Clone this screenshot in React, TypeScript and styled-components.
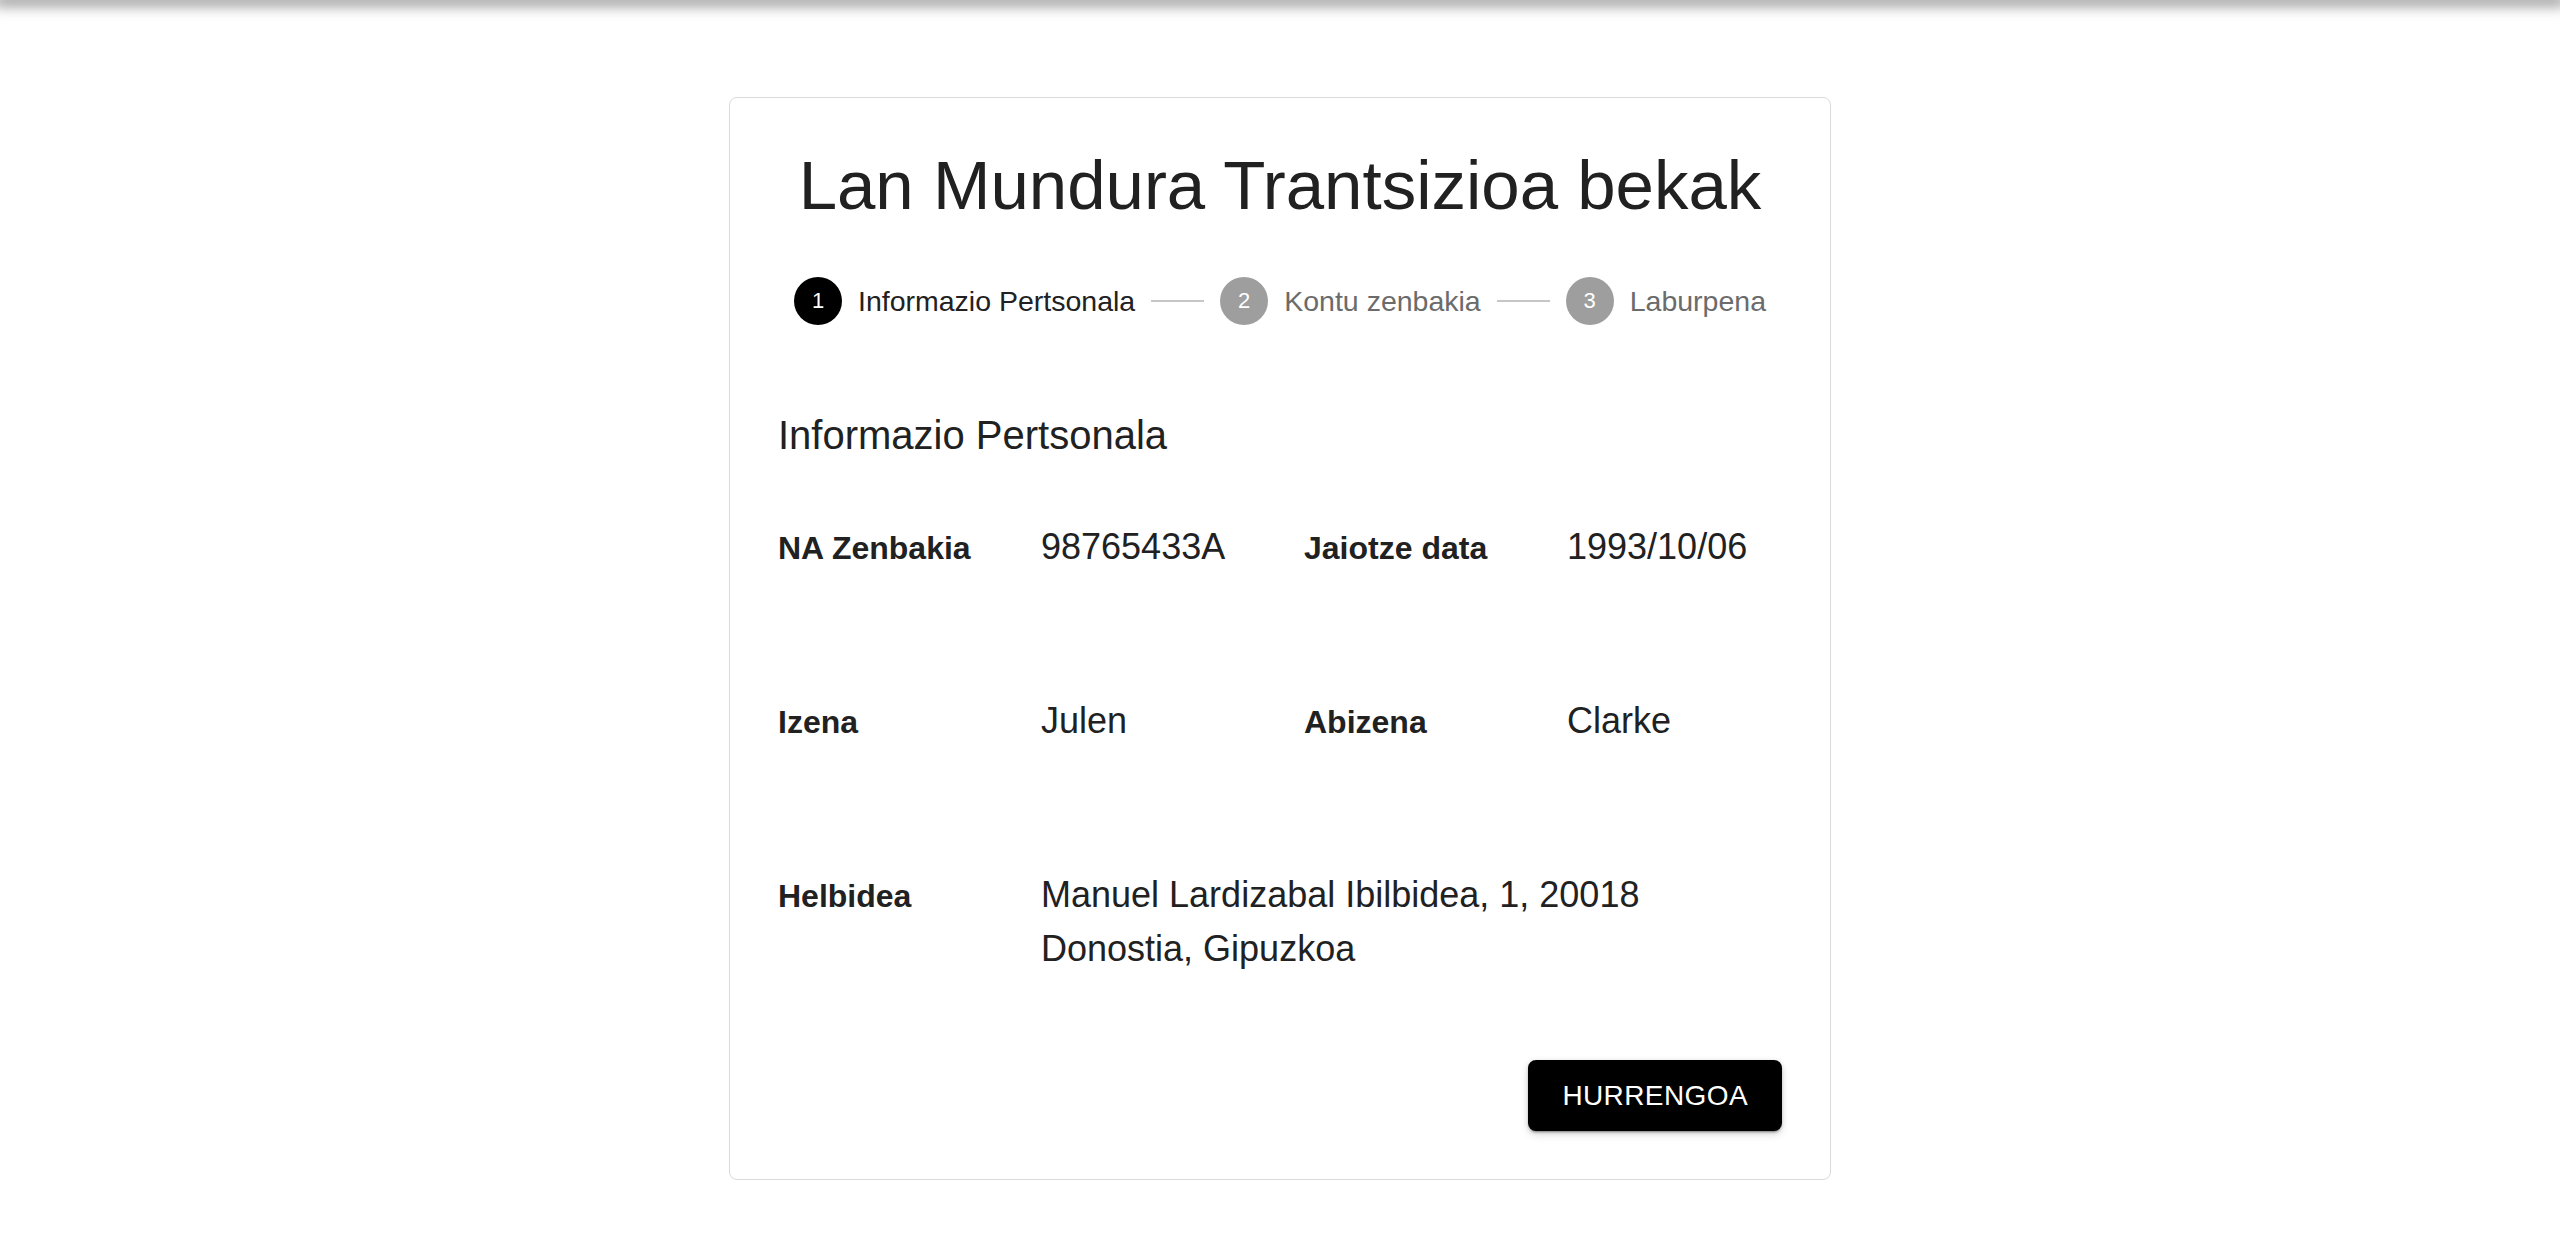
import React from "react";
import styled, { createGlobalStyle } from "styled-components";

const GlobalStyle = createGlobalStyle`
  html, body {
    margin: 0;
    padding: 0;
    background: #ffffff;
  }
  body {
    font-family: "Liberation Sans", Arial, Helvetica, sans-serif;
    color: #212121;
  }
  * { box-sizing: border-box; }
`;

const TopBar = styled.header`
  height: 0;
  width: 100%;
  box-shadow: 0 0 14px 6px rgba(0, 0, 0, 0.42);
`;

const Page = styled.main`
  display: flex;
  justify-content: center;
  padding: 97px 0 72px;
`;

const Card = styled.section`
  width: 1102px;
  border: 1px solid #dadada;
  border-radius: 8px;
  padding: 48px;
  background: #fff;
`;

const Title = styled.h1`
  margin: 0;
  font-size: 69px;
  line-height: 80px;
  font-weight: 400;
  text-align: center;
  color: #212121;
`;

const Stepper = styled.nav`
  display: flex;
  align-items: center;
  margin-top: 51px;
`;

const Step = styled.div`
  display: flex;
  align-items: center;
  padding: 0 16px;
`;

const StepIcon = styled.span<{ $active?: boolean }>`
  width: 48px;
  height: 48px;
  border-radius: 50%;
  flex: none;
  display: flex;
  align-items: center;
  justify-content: center;
  background: ${(p) => (p.$active ? "#000000" : "#9e9e9e")};
  color: #ffffff;
  font-size: 22px;
  line-height: 1;
`;

const StepLabel = styled.span<{ $active?: boolean }>`
  margin-left: 16px;
  font-size: 28.5px;
  line-height: 40px;
  white-space: nowrap;
  color: ${(p) => (p.$active ? "#212121" : "#6b6b6b")};
`;

const Connector = styled.span`
  flex: 1 1 auto;
  border-top: 2px solid #c6c6c6;
`;

const SectionTitle = styled.h2`
  margin: 78px 0 0;
  font-size: 40px;
  line-height: 64px;
  font-weight: 400;
  color: #212121;
`;

const InfoGrid = styled.dl`
  margin: 53px 0 0;
  display: grid;
  grid-template-columns: repeat(4, 1fr);
  column-gap: 48px;
  row-gap: 120px;
  align-items: baseline;
`;

const Label = styled.dt`
  margin: 0;
  font-size: 32px;
  line-height: 48px;
  font-weight: 700;
  color: #212121;
`;

const Value = styled.dd<{ $span?: number }>`
  margin: 0;
  font-size: 36px;
  line-height: 54px;
  color: #212121;
  grid-column: span ${(p) => p.$span ?? 1};
`;

const Actions = styled.div`
  display: flex;
  justify-content: flex-end;
  margin-top: 84px;
`;

const PrimaryButton = styled.button`
  font-family: inherit;
  border: none;
  cursor: pointer;
  background: #000000;
  color: #ffffff;
  font-size: 28px;
  line-height: 49px;
  letter-spacing: 0.4px;
  text-transform: uppercase;
  padding: 11px 34px;
  border-radius: 8px;
  box-shadow: 0 3px 1px -2px rgba(0, 0, 0, 0.2), 0 2px 2px 0 rgba(0, 0, 0, 0.14),
    0 1px 5px 0 rgba(0, 0, 0, 0.12), 0 4px 8px rgba(0, 0, 0, 0.12);
`;

const steps = ["Informazio Pertsonala", "Kontu zenbakia", "Laburpena"];

const fields: { label: string; value: string; span?: number }[] = [
  { label: "NA Zenbakia", value: "98765433A" },
  { label: "Jaiotze data", value: "1993/10/06" },
  { label: "Izena", value: "Julen" },
  { label: "Abizena", value: "Clarke" },
  {
    label: "Helbidea",
    value: "Manuel Lardizabal Ibilbidea, 1, 20018 Donostia, Gipuzkoa",
    span: 3,
  },
];

export default function App() {
  const activeStep = 0;
  return (
    <>
      <GlobalStyle />
      <TopBar />
      <Page>
        <Card>
          <Title>Lan Mundura Trantsizioa bekak</Title>
          <Stepper>
            {steps.map((s, i) => (
              <React.Fragment key={s}>
                {i > 0 && <Connector />}
                <Step>
                  <StepIcon $active={i === activeStep}>{i + 1}</StepIcon>
                  <StepLabel $active={i === activeStep}>{s}</StepLabel>
                </Step>
              </React.Fragment>
            ))}
          </Stepper>
          <SectionTitle>Informazio Pertsonala</SectionTitle>
          <InfoGrid>
            {fields.map((f) => (
              <React.Fragment key={f.label}>
                <Label>{f.label}</Label>
                <Value $span={f.span}>{f.value}</Value>
              </React.Fragment>
            ))}
          </InfoGrid>
          <Actions>
            <PrimaryButton type="button">Hurrengoa</PrimaryButton>
          </Actions>
        </Card>
      </Page>
    </>
  );
}
